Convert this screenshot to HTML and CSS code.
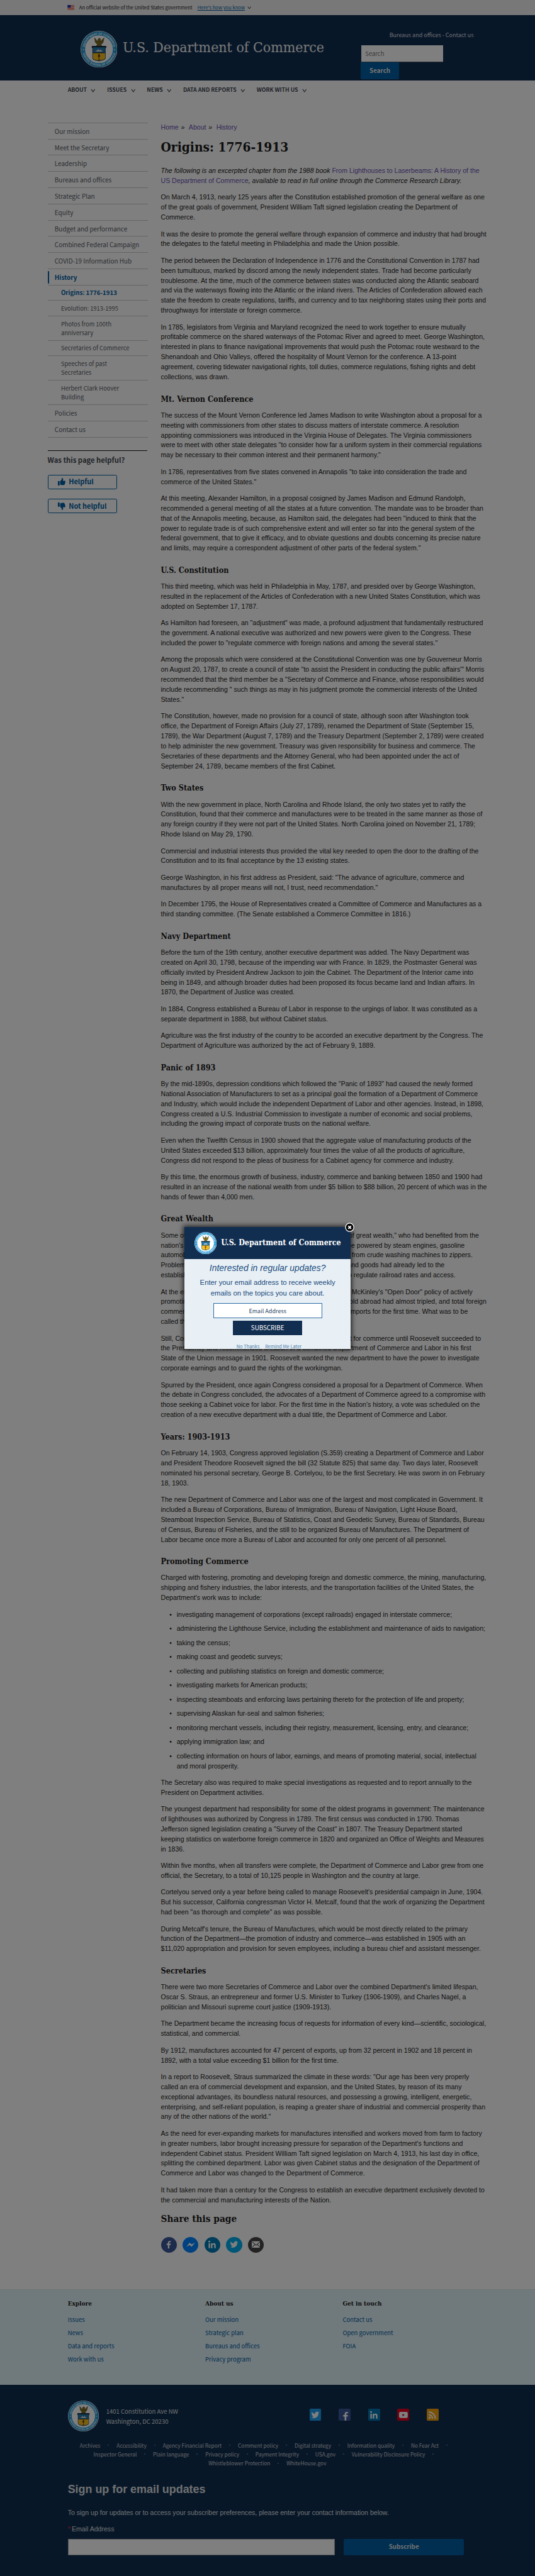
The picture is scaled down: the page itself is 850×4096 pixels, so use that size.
FILE: index.html
```html
<!DOCTYPE html>
<html lang="en">
<head>
<meta charset="utf-8">
<title>Origins: 1776-1913 | U.S. Department of Commerce</title>
<link rel="stylesheet" href="styles.css">
</head>
<body>
<svg class="defs" aria-hidden="true">
  <symbol id="seal" viewBox="0 0 100 100">
    <circle cx="50" cy="50" r="50" fill="#fff"/>
    <circle cx="50" cy="50" r="43" fill="none" stroke="#2b9fd9" stroke-width="10.5"/>
    <circle cx="50" cy="50" r="48" fill="none" stroke="#1d6fa5" stroke-width="1"/>
    <path id="arcTop" d="M10.5 50a39.5 39.5 0 0 1 79 0" fill="none"/>
    <path id="arcBottom" d="M4.5 50a45.500 45.500 0 0 0 91 0" fill="none"/>
    <text class="seal-text"><textPath href="#arcTop" startOffset="50%" text-anchor="middle" textLength="112">DEPARTMENT OF COMMERCE</textPath></text>
    <text class="seal-text"><textPath href="#arcBottom" startOffset="50%" text-anchor="middle" textLength="120">UNITED STATES OF AMERICA</textPath></text>
    <circle cx="7.500" cy="51" r="1.500" fill="#fff"/><circle cx="92.500" cy="51" r="1.500" fill="#fff"/>
    <path d="M38 19l8 10 2-7 3-2 3 2 0 7 10-10-3 13-6 6 3 3-8-1-7 1 3-4-6-6z" fill="#7a6a1c" stroke="#3a3412" stroke-width="1"/>
    <path d="M31 42h38v4l-2 1v27q0 4-5 5l-12 3-12-3q-5-1-5-5V47l-2-1z" fill="#1f7cb5" stroke="#17202b" stroke-width="1.500"/>
    <path d="M33.500 60h33v14q0 3-5 4l-11.500 3-11.500-3q-5-1-5-4z" fill="#f5bf1d"/>
    <path d="M31 42h38v3H31zM33 59h34v1.500H33z" fill="#17202b"/>
    <path d="M39 54l6-1 2-5 4 5 4-4 1 4 5 1-3 3H42z" fill="#d8e6ee" stroke="#17202b" stroke-width=".6"/>
    <path d="M50 62v18M46.500 79h7M48 65h4v6h-4z" stroke="#6b3a12" stroke-width="1.600" fill="#c94d1d"/>
  </symbol>
  <symbol id="chev" viewBox="0 0 12 12"><path d="M1.500 3L6 9.500 10.500 3" fill="none" stroke="currentColor" stroke-width="1.700"/></symbol>
  <symbol id="thumb" viewBox="0 0 20 20"><path d="M0 8.500h4.500V20H0zM6 8.500l4-4.500V1q0-1 1-1 3 0 3 3.500 0 2-1 4h5q2 0 2 2 0 1.300-1 1.700.8.600.6 1.600-.2 1-1.100 1.400.5.700.1 1.600-.3.800-1.100 1 .3.700-.1 1.300-.5.900-1.900.900H12q-2.500 0-4-.8l-2-.7z" fill="currentColor"/></symbol>
  <symbol id="bird" viewBox="0 0 24 24"><path d="M23 5.100c-.8.400-1.700.6-2.600.7.900-.6 1.600-1.400 2-2.500-.9.500-1.900.900-2.900 1.100a4.500 4.500 0 0 0-7.700 4.100C8 8.300 4.700 6.500 2.500 3.800a4.500 4.500 0 0 0 1.400 6c-.7 0-1.400-.2-2-.6 0 2.200 1.500 4.100 3.600 4.500-.7.200-1.400.2-2 .1a4.500 4.500 0 0 0 4.200 3.100A9.100 9.100 0 0 1 1 18.800 12.800 12.800 0 0 0 20.700 7.400C21.600 6.800 22.400 6 23 5.100z"/></symbol>
  <symbol id="fb" viewBox="0 0 24 24"><path d="M14 23V13.500h3.400l.6-3.800h-4V7.300c0-1.200.6-1.900 2-1.900h2V2.100C17.500 2 16.500 2 15.500 2 12.300 2 10 3.900 10 7.100v2.600H6.500v3.800H10V23z"/></symbol>
  <symbol id="lin" viewBox="0 0 24 24"><circle cx="4.500" cy="4" r="2.500"/><path d="M2.500 8.500h4V22h-4zM9 8.500h4v2q1.300-2.400 4.200-2.400 4.800 0 4.800 5.900v8h-4v-7.200q0-3-2.300-3-2.700 0-2.700 3V22H9z"/></symbol>
</svg>

<div class="page">
  <div class="banner">
    <svg class="flag" viewBox="0 0 17 12"><rect width="17" height="12" fill="#fff"/><path d="M0 1h17M0 3.700h17M0 6.400h17M0 9h17M0 11.500h17" stroke="#db3e1f" stroke-width="1.400"/><rect width="8" height="6.500" fill="#1e33b1"/></svg>
    <span>An official website of the United States government</span>
    <a class="how">Here's how you know</a>
    <svg class="chev-s"><use href="#chev"/></svg>
  </div>

  <header class="header">
    <svg class="seal-lg"><use href="#seal"/></svg>
    <div class="brand">U.S. Department of Commerce</div>
    <div class="tools">
      <div class="toplinks">Bureaus and offices - Contact us</div>
      <div class="search-input">Search</div>
      <div class="search-btn">Search</div>
    </div>
  </header>

  <nav class="nav">
    <span>ABOUT<svg><use href="#chev"/></svg></span>
    <span>ISSUES<svg><use href="#chev"/></svg></span>
    <span>NEWS<svg><use href="#chev"/></svg></span>
    <span>DATA AND REPORTS<svg><use href="#chev"/></svg></span>
    <span>WORK WITH US<svg><use href="#chev"/></svg></span>
  </nav>

  <div class="columns">
    <aside class="side">
      <ul class="menu">
        <li>Our mission</li>
        <li>Meet the Secretary</li>
        <li>Leadership</li>
        <li>Bureaus and offices</li>
        <li>Strategic Plan</li>
        <li>Equity</li>
        <li>Budget and performance</li>
        <li>Combined Federal Campaign</li>
        <li>COVID-19 Information Hub</li>
        <li class="current">History</li>
        <li class="sub on">Origins: 1776-1913</li>
        <li class="sub">Evolution: 1913-1995</li>
        <li class="sub">Photos from 100th<br>anniversary</li>
        <li class="sub">Secretaries of Commerce</li>
        <li class="sub">Speeches of past<br>Secretaries</li>
        <li class="sub">Herbert Clark Hoover<br>Building</li>
        <li>Policies</li>
        <li>Contact us</li>
      </ul>
      <div class="feedback">
        <div class="question">Was this page helpful?</div>
        <div class="vote"><svg><use href="#thumb"/></svg>Helpful</div>
        <div class="vote"><svg class="down"><use href="#thumb"/></svg>Not helpful</div>
      </div>
    </aside>

    <main class="main">
      <div class="crumbs"><a>Home</a> » <a>About</a> » <a>History</a></div>
      <h1>Origins: 1776-1913</h1>
      <p><i>The following is an excerpted chapter from the 1988 book </i><a>From Lighthouses to Laserbeams: A History of the<br>US Department of Commerce</a><i>, available to read in full online through the Commerce Research Library.</i></p>
      <p>On March 4, 1913, nearly 125 years after the Constitution established promotion of the general welfare as one<br>of the great goals of government, President William Taft signed legislation creating the Department of<br>Commerce.</p>
      <p>It was the desire to promote the general welfare through expansion of commerce and industry that had brought<br>the delegates to the fateful meeting in Philadelphia and made the Union possible.</p>
      <p>The period between the Declaration of Independence in 1776 and the Constitutional Convention in 1787 had<br>been tumultuous, marked by discord among the newly independent states. Trade had become particularly<br>troublesome. At the time, much of the commerce between states was conducted along the Atlantic seaboard<br>and via the waterways flowing into the Atlantic or the inland rivers. The Articles of Confederation allowed each<br>state the freedom to create regulations, tariffs, and currency and to tax neighboring states using their ports and<br>throughways for interstate or foreign commerce.</p>
      <p>In 1785, legislators from Virginia and Maryland recognized the need to work together to ensure mutually<br>profitable commerce on the shared waterways of the Potomac River and agreed to meet. George Washington,<br>interested in plans to finance navigational improvements that would push the Potomac route westward to the<br>Shenandoah and Ohio Valleys, offered the hospitality of Mount Vernon for the conference. A 13-point<br>agreement, covering tidewater navigational rights, toll duties, commerce regulations, fishing rights and debt<br>collections, was drawn.</p>

      <h2>Mt. Vernon Conference</h2>
      <p>The success of the Mount Vernon Conference led James Madison to write Washington about a proposal for a<br>meeting with commissioners from other states to discuss matters of interstate commerce. A resolution<br>appointing commissioners was introduced in the Virginia House of Delegates. The Virginia commissioners<br>were to meet with other state delegates "to consider how far a uniform system in their commercial regulations<br>may be necessary to their common interest and their permanent harmony."</p>
      <p>In 1786, representatives from five states convened in Annapolis "to take into consideration the trade and<br>commerce of the United States."</p>
      <p>At this meeting, Alexander Hamilton, in a proposal cosigned by James Madison and Edmund Randolph,<br>recommended a general meeting of all the states at a future convention. The mandate was to be broader than<br>that of the Annapolis meeting, because, as Hamilton said, the delegates had been "induced to think that the<br>power to regulate trade is of such comprehensive extent and will enter so far into the general system of the<br>federal government, that to give it efficacy, and to obviate questions and doubts concerning its precise nature<br>and limits, may require a correspondent adjustment of other parts of the federal system."</p>

      <h2>U.S. Constitution</h2>
      <p>This third meeting, which was held in Philadelphia in May, 1787, and presided over by George Washington,<br>resulted in the replacement of the Articles of Confederation with a new United States Constitution, which was<br>adopted on September 17, 1787.</p>
      <p>As Hamilton had foreseen, an "adjustment" was made, a profound adjustment that fundamentally restructured<br>the government. A national executive was authorized and new powers were given to the Congress. These<br>included the power to "regulate commerce with foreign nations and among the several states."</p>
      <p>Among the proposals which were considered at the Constitutional Convention was one by Gouverneur Morris<br>on August 20, 1787, to create a council of state "to assist the President in conducting the public affairs'" Morris<br>recommended that the third member be a "Secretary of Commerce and Finance, whose responsibilities would<br>include recommending " such things as may in his judgment promote the commercial interests of the United<br>States."</p>
      <p>The Constitution, however, made no provision for a council of state, although soon after Washington took<br>office, the Department of Foreign Affairs (July 27, 1789), renamed the Department of State (September 15,<br>1789), the War Department (August 7, 1789) and the Treasury Department (September 2, 1789) were created<br>to help administer the new government. Treasury was given responsibility for business and commerce. The<br>Secretaries of these departments and the Attorney General, who had been appointed under the act of<br>September 24, 1789, became members of the first Cabinet.</p>

      <h2>Two States</h2>
      <p>With the new government in place, North Carolina and Rhode Island, the only two states yet to ratify the<br>Constitution, found that their commerce and manufactures were to be treated in the same manner as those of<br>any foreign country if they were not part of the United States. North Carolina joined on November 21, 1789;<br>Rhode Island on May 29, 1790.</p>
      <p>Commercial and industrial interests thus provided the vital key needed to open the door to the drafting of the<br>Constitution and to its final acceptance by the 13 existing states.</p>
      <p>George Washington, in his first address as President, said: "The advance of agriculture, commerce and<br>manufactures by all proper means will not, I trust, need recommendation."</p>
      <p>In December 1795, the House of Representatives created a Committee of Commerce and Manufactures as a<br>third standing committee. (The Senate established a Commerce Committee in 1816.)</p>

      <h2>Navy Department</h2>
      <p>Before the turn of the 19th century, another executive department was added. The Navy Department was<br>created on April 30, 1798, because of the impending war with France. In 1829, the Postmaster General was<br>officially invited by President Andrew Jackson to join the Cabinet. The Department of the Interior came into<br>being in 1849, and although broader duties had been proposed its focus became land and Indian affairs. In<br>1870, the Department of Justice was created.</p>
      <p>In 1884, Congress established a Bureau of Labor in response to the urgings of labor. It was constituted as a<br>separate department in 1888, but without Cabinet status.</p>
      <p>Agriculture was the first industry of the country to be accorded an executive department by the Congress. The<br>Department of Agriculture was authorized by the act of February 9, 1889.</p>

      <h2>Panic of 1893</h2>
      <p>By the mid-1890s, depression conditions which followed the "Panic of 1893" had caused the newly formed<br>National Association of Manufacturers to set as a principal goal the formation of a Department of Commerce<br>and Industry, which would include the independent Department of Labor and other agencies. Instead, in 1898,<br>Congress created a U.S. Industrial Commission to investigate a number of economic and social problems,<br>including the growing impact of corporate trusts on the national welfare.</p>
      <p>Even when the Twelfth Census in 1900 showed that the aggregate value of manufacturing products of the<br>United States exceeded $13 billion, approximately four times the value of all the products of agriculture,<br>Congress did not respond to the pleas of business for a Cabinet agency for commerce and industry.</p>
      <p>By this time, the enormous growth of business, industry, commerce and banking between 1850 and 1900 had<br>resulted in an increase of the national wealth from under $5 billion to $88 billion, 20 percent of which was in the<br>hands of fewer than 4,000 men.</p>

      <h2>Great Wealth</h2>
      <div class="para">
        <div class="row w803"><span>Some of them were called "malefactors</span><span>of great wealth," who had benefited from the</span></div>
        <div class="row w767"><span>nation's industrial growth. Factories could</span><span>be powered by steam engines, gasoline</span></div>
        <div class="row w787"><span>automobiles and new inventions ranged</span><span>from crude washing machines to zippers.</span></div>
        <div class="row w716"><span>Problems in moving people</span><span>and goods had already led to the</span></div>
        <div class="row w744"><span>establishment of a commission</span><span>to regulate railroad rates and access.</span></div>
      </div>
      <div class="para">
        <div class="row w787"><span>At the end of the century, President</span><span>McKinley's "Open Door" policy of actively</span></div>
        <div class="row w822"><span>promoting trade: goods</span><span>sold abroad had almost tripled, and total foreign</span></div>
        <div class="row w775"><span>commerce exports exceeded</span><span>imports for the first time. What was to be</span></div>
        <div>called the American Century had begun.</div>
      </div>
      <div class="para">
        <div class="row w808"><span>Still, Congress did not create a</span><span>department for commerce until Roosevelt succeeded to</span></div>
        <div>the Presidency and recommended creation of a combined Department of Commerce and Labor in his first<br>State of the Union message in 1901. Roosevelt wanted the new department to have the power to investigate<br>corporate earnings and to guard the rights of the workingman.</div>
      </div>
      <p>Spurred by the President, once again Congress considered a proposal for a Department of Commerce. When<br>the debate in Congress concluded, the advocates of a Department of Commerce agreed to a compromise with<br>those seeking a Cabinet voice for labor. For the first time in the Nation's history, a vote was scheduled on the<br>creation of a new executive department with a dual title, the Department of Commerce and Labor.</p>

      <h2>Years: 1903-1913</h2>
      <p>On February 14, 1903, Congress approved legislation (S.359) creating a Department of Commerce and Labor<br>and President Theodore Roosevelt signed the bill (32 Statute 825) that same day. Two days later, Roosevelt<br>nominated his personal secretary, George B. Cortelyou, to be the first Secretary. He was sworn in on February<br>18, 1903.</p>
      <p>The new Department of Commerce and Labor was one of the largest and most complicated in Government. It<br>included a Bureau of Corporations, Bureau of Immigration, Bureau of Navigation, Light House Board,<br>Steamboat Inspection Service, Bureau of Statistics, Coast and Geodetic Survey, Bureau of Standards, Bureau<br>of Census, Bureau of Fisheries, and the still to be organized Bureau of Manufactures. The Department of<br>Labor became once more a Bureau of Labor and accounted for only one percent of all personnel.</p>

      <h2>Promoting Commerce</h2>
      <p>Charged with fostering, promoting and developing foreign and domestic commerce, the mining, manufacturing,<br>shipping and fishery industries, the labor interests, and the transportation facilities of the United States, the<br>Department's work was to include:</p>
      <ul class="list">
        <li>investigating management of corporations (except railroads) engaged in interstate commerce;</li>
        <li>administering the Lighthouse Service, including the establishment and maintenance of aids to navigation;</li>
        <li>taking the census;</li>
        <li>making coast and geodetic surveys;</li>
        <li>collecting and publishing statistics on foreign and domestic commerce;</li>
        <li>investigating markets for American products;</li>
        <li>inspecting steamboats and enforcing laws pertaining thereto for the protection of life and property;</li>
        <li>supervising Alaskan fur-seal and salmon fisheries;</li>
        <li>monitoring merchant vessels, including their registry, measurement, licensing, entry, and clearance;</li>
        <li>applying immigration law; and</li>
        <li>collecting information on hours of labor, earnings, and means of promoting material, social, intellectual<br>and moral prosperity.</li>
      </ul>
      <p>The Secretary also was required to make special investigations as requested and to report annually to the<br>President on Department activities.</p>
      <p>The youngest department had responsibility for some of the oldest programs in government: The maintenance<br>of lighthouses was authorized by Congress in 1789. The first census was conducted in 1790. Thomas<br>Jefferson signed legislation creating a "Survey of the Coast" in 1807. The Treasury Department started<br>keeping statistics on waterborne foreign commerce in 1820 and organized an Office of Weights and Measures<br>in 1836.</p>
      <p>Within five months, when all transfers were complete, the Department of Commerce and Labor grew from one<br>official, the Secretary, to a total of 10,125 people in Washington and the country at large.</p>
      <p>Cortelyou served only a year before being called to manage Roosevelt's presidential campaign in June, 1904.<br>But his successor, California congressman Victor H. Metcalf, found that the work of organizing the Department<br>had been "as thorough and complete" as was possible.</p>
      <p>During Metcalf's tenure, the Bureau of Manufactures, which would be most directly related to the primary<br>function of the Department—the promotion of industry and commerce—was established in 1905 with an<br>$11,020 appropriation and provision for seven employees, including a bureau chief and assistant messenger.</p>

      <h2>Secretaries</h2>
      <p>There were two more Secretaries of Commerce and Labor over the combined Department's limited lifespan,<br>Oscar S. Straus, an entrepreneur and former U.S. Minister to Turkey (1906-1909), and Charles Nagel, a<br>politician and Missouri supreme court justice (1909-1913).</p>
      <p>The Department became the increasing focus of requests for information of every kind—scientific, sociological,<br>statistical, and commercial.</p>
      <p>By 1912, manufactures accounted for 47 percent of exports, up from 32 percent in 1902 and 18 percent in<br>1892, with a total value exceeding $1 billion for the first time.</p>
      <p>In a report to Roosevelt, Straus summarized the climate in these words: "Our age has been very properly<br>called an era of commercial development and expansion, and the United States, by reason of its many<br>exceptional advantages, its boundless natural resources, and possessing a growing, intelligent, energetic,<br>enterprising, and self-reliant population, is reaping a greater share of industrial and commercial prosperity than<br>any of the other nations of the world."</p>
      <p>As the need for ever-expanding markets for manufactures intensified and workers moved from farm to factory<br>in greater numbers, labor brought increasing pressure for separation of the Department's functions and<br>independent Cabinet status. President William Taft signed legislation on March 4, 1913, his last day in office,<br>splitting the combined department. Labor was given Cabinet status and the designation of the Department of<br>Commerce and Labor was changed to the Department of Commerce.</p>
      <p>It had taken more than a century for the Congress to establish an executive department exclusively devoted to<br>the commercial and manufacturing interests of the Nation.</p>

      <div class="share-title">Share this page</div>
      <div class="share">
        <span class="c-fb"><svg><use href="#fb"/></svg></span>
        <span class="c-ms"><svg viewBox="0 0 24 24"><path d="M0 18L9.500 7l5 4.500L24 7l-9.500 11-5-4.500z"/></svg></span>
        <span class="c-in"><svg><use href="#lin"/></svg></span>
        <span class="c-tw"><svg><use href="#bird"/></svg></span>
        <span class="c-em"><svg viewBox="0 0 24 24"><rect y="3" width="24" height="18" rx="1.500"/><path d="M1.500 5L12 14 22.500 5M1.500 19.500L8.500 12M22.500 19.500L15.500 12" fill="none" stroke="#444" stroke-width="1.800"/></svg></span>
      </div>
    </main>
  </div>

  <footer>
    <div class="foot-links">
      <div><b>Explore</b><a>Issues</a><a>News</a><a>Data and reports</a><a>Work with us</a></div>
      <div><b>About us</b><a>Our mission</a><a>Strategic plan</a><a>Bureaus and offices</a><a>Privacy program</a></div>
      <div><b>Get in touch</b><a>Contact us</a><a>Open government</a><a>FOIA</a></div>
    </div>
    <div class="foot-dark">
      <div class="identity">
        <svg class="seal-md"><use href="#seal"/></svg>
        <div class="address">1401 Constitution Ave NW<br>Washington, DC 20230</div>
        <div class="social">
          <span class="s-tw"><svg><use href="#bird"/></svg></span>
          <span class="s-fb"><svg class="low"><use href="#fb"/></svg></span>
          <span class="s-in"><svg><use href="#lin"/></svg></span>
          <span class="s-yt"><svg viewBox="0 0 24 24"><rect y="3.500" width="24" height="17" rx="4"/><path d="M9.500 8.500v7l6-3.500z" fill="#b0001a"/></svg></span>
          <span class="s-rs"><svg viewBox="0 0 24 24"><circle cx="4.500" cy="19.500" r="3"/><path d="M2 11.500a10.500 10.500 0 0 1 10.500 10.500M2 4a18 18 0 0 1 18 18" fill="none" stroke="#fff" stroke-width="3.500"/></svg></span>
        </div>
      </div>
      <div class="legal">
        <div><span class="dot">Archives</span><span class="dot">Accessibility</span><span class="dot">Agency Financial Report</span><span class="dot">Comment policy</span><span class="dot">Digital strategy</span><span class="dot">Information quality</span><span class="dot">No Fear Act</span></div>
        <div><span class="dot">Inspector General</span><span class="dot">Plain language</span><span class="dot">Privacy policy</span><span class="dot">Payment Integrity</span><span class="dot">USA.gov</span><span class="dot">Vulnerability Disclosure Policy</span></div>
        <div><span class="dot">Whistleblower Protection</span><span>WhiteHouse.gov</span></div>
      </div>
      <div class="signup">
        <div class="signup-title">Sign up for email updates</div>
        <div class="signup-text">To sign up for updates or to access your subscriber preferences, please enter your contact information below.</div>
        <div class="signup-label"><span>*</span>Email Address</div>
        <div class="signup-form"><div class="signup-input"></div><div class="signup-btn">Subscribe</div></div>
      </div>
    </div>
  </footer>

  <div class="overlay"></div>
  <div class="modal">
    <div class="modal-body">
      <div class="modal-head"><svg><use href="#seal"/></svg><span>U.S. Department of Commerce</span></div>
      <div class="modal-title">Interested in regular updates?</div>
      <div class="modal-text">Enter your email address to receive weekly<br>emails on the topics you care about.</div>
      <div class="modal-input">Email Address</div>
      <div class="modal-btn">SUBSCRIBE</div>
      <div class="modal-links"><span>No Thanks</span><span>Remind Me Later</span></div>
    </div>
    <svg class="close" viewBox="0 0 24 24"><circle cx="12" cy="12" r="10.500" fill="#000" stroke="#fff" stroke-width="2"/><path d="M8.500 8.500l7 7M15.500 8.500l-7 7" stroke="#fff" stroke-width="3"/></svg>
  </div>
</div>
</body>
</html>
```
FILE: styles.css
```css
* { box-sizing: border-box; }
html { overflow: hidden; }
body { margin: 0; background: #fff; overflow: hidden; }
ul { list-style: none; margin: 0; padding: 0; }
svg { display: block; }
.defs { position: absolute; width: 0; height: 0; }
.seal-text { font: bold 7.5px "Liberation Sans", sans-serif; fill: #fff; }

.page {
  zoom: 0.6294;
  position: relative;
  width: 1350.5px;
  height: 6508px;
  overflow: hidden;
  background: #fff;
  color: #1b1b1b;
  font: 16.8px/25.2px "Liberation Sans", Arial, sans-serif;
  white-space: nowrap;
}

/* Sans face used by the site chrome */
.banner, .toplinks, .search-input, .search-btn, .nav, .side, .foot-links a,
.address, .legal, .signup-btn, .modal-input, .modal-btn, .modal-links {
  font-family: "Noto Sans CJK SC", "Noto Sans", sans-serif;
}
.brand, h1, h2, .share-title, .foot-links b, .modal-head {
  font-family: "DejaVu Serif Condensed", "DejaVu Serif", serif;
}

.banner {
  display: flex;
  align-items: center;
  height: 38px;
  padding-left: 170px;
  background: #f0f0f0;
  font-size: 12.05px;
  line-height: 16px;
}
.flag { width: 18px; height: 12px; margin-right: 12px; }
.how { margin-left: 13px; color: #005ea2; text-decoration: underline; }
.chev-s { width: 10px; height: 10px; margin-left: 6px; stroke-width: 2; }

.header {
  display: flex;
  height: 166px;
  padding-left: 203px;
  background: #112e51;
  color: #fff;
}
.seal-lg { width: 93px; height: 93px; margin-top: 40px; }
.brand { width: 602px; padding: 61px 0 0 14px; font-size: 36.4px; line-height: 44px; color: #f2f2f2; }
.tools { padding-top: 39px; }
.toplinks { margin-left: 85px; height: 37px; font-size: 14.36px; line-height: 24px; color: #dcdee0; }
.tools .search-input {
  width: 207px;
  height: 43px;
  margin-left: 14px;
  padding-left: 10px;
  background: #fff;
  border-bottom: 1px solid #565c65;
  color: #757575;
  font-size: 15px;
  line-height: 43px;
}
.search-btn {
  width: 96px;
  height: 42px;
  margin: 1px 0 0 13px;
  border-radius: 0 0 4px 4px;
  background: #005ea2;
  color: #e6e6e6;
  font-size: 15.6px;
  font-weight: 700;
  line-height: 42px;
  text-align: center;
}

.nav {
  display: flex;
  gap: 29px;
  height: 105.6px;
  padding: 14px 0 0 171px;
  font-size: 13.98px;
  font-weight: 700;
  line-height: 20px;
  color: #3d4551;
}
.nav span { display: flex; align-items: center; height: 20px; }
.nav svg { width: 12px; height: 12px; margin-left: 10px; margin-top: 2px; }

.columns { display: flex; height: 5474.4px; padding-left: 120px; }
.side { width: 286px; color: #565c65; }
.menu { width: 254px; border-top: 1px solid #c9c9c9; }
.menu li {
  height: 41px;
  padding: 8px 0 7px 18px;
  border-bottom: 1px solid #c9c9c9;
  font-size: 15.8px;
  line-height: 25px;
}
.menu .current {
  position: relative;
  color: #005ea2;
  font-weight: 700;
}
.menu .current::before {
  content: "";
  position: absolute;
  left: 0;
  top: 5px;
  width: 4px;
  height: 31px;
  border-radius: 4px;
  background: #005ea2;
}
.menu .sub { height: auto; padding: 7.4px 0 7.4px 34px; font-size: 14.85px; line-height: 22.65px; }
.menu .on { color: #005ea2; font-weight: 700; font-size: 15.4px; }
.feedback { width: 252px; margin-top: 32px; border-top: 1px solid #1b1b1b; }
.question { padding-top: 10px; height: 60.5px; font-size: 17.86px; font-weight: 700; line-height: 26px; color: #454a52; }
.vote {
  display: flex;
  align-items: center;
  gap: 8px;
  width: 176px;
  height: 37px;
  margin-bottom: 23.7px;
  padding-left: 25px;
  border: 2px solid #005ea2;
  border-radius: 4px;
  color: #005ea2;
  font-size: 17.4px;
  font-weight: 700;
}
.vote svg { width: 19px; height: 19px; }
.vote .down { transform: scaleY(-1); }

.main { width: 840px; }
.main a { color: #6a50b0; }
.crumbs { height: 25.2px; word-spacing: 1.5px; }
.crumbs a + a { margin-left: 4px; }
h1 { margin: 14.7px 0 26.2px; height: 44px; font-size: 33px; line-height: 44px; }
h2 { height: 24px; margin: 29.9px 0 17.8px; font-size: 20.06px; line-height: 24px; }
.main p, .para { margin: 0 0 16.8px; }
.main p:has(+ h2), .para:has(+ h2) { margin-bottom: 0; }
.row { display: flex; justify-content: space-between; }
.w716 { width: 716px; }
.w744 { width: 744px; }
.w767 { width: 767px; }
.w775 { width: 775px; }
.w787 { width: 787px; }
.w803 { width: 803px; }
.w808 { width: 808px; }
.w822 { width: 822px; }
.list { margin-bottom: 16.8px; }
.list li { position: relative; margin-bottom: 10.6px; padding-left: 40px; }
.list li:last-child { margin-bottom: 0; }
.list li::before { content: "•"; position: absolute; left: 22px; }
.share-title { padding-top: 1px; font-size: 24.33px; font-weight: 700; line-height: 32px; }
.share { display: flex; gap: 15px; margin-top: 30px; }
.share span { width: 40px; height: 40px; padding: 9px; border-radius: 50%; }
.share svg { width: 22px; height: 22px; fill: #fff; }
.c-fb { background: #3b5998; }
.c-ms { background: #0084ff; }
.c-in { background: #007bb6; }
.c-tw { background: #00aced; }
.c-em { background: #444; }

.foot-links {
  display: flex;
  height: 241px;
  padding: 20px 0 0 171px;
  background: #e1f3f8;
  border-top: 1px solid #d8ece0;
}
.foot-links div { display: flex; flex-direction: column; width: 347px; }
.foot-links b { height: 37.5px; font-size: 15.84px; line-height: 28px; }
.foot-links a { height: 33.4px; color: #005ea2; font-size: 15.1px; line-height: 33.4px; }
.foot-dark { height: 483px; padding: 40px 0 0 171px; background: #112e51; color: #dfe1e2; }
.identity { display: flex; height: 78px; }
.seal-md { width: 78px; height: 78px; }
.address { width: 532px; padding: 16px 0 0 19px; font-size: 15.2px; line-height: 25.4px; }
.social { display: flex; gap: 44px; padding-top: 21px; }
.social span { width: 30px; height: 30px; padding: 4px; border-radius: 3px; }
.social svg { width: 22px; height: 22px; fill: #fff; }
.social .low { width: 25px; height: 27px; }
.s-tw { background: #1da1f2; }
.s-fb { background: #3b5998; }
.s-in { background: #0077b5; }
.s-yt { background: #e6001f; }
.s-rs { background: #f7a30a; }
.legal { width: 1008px; margin-top: 23px; font-size: 13.28px; line-height: 22.8px; color: #c8ccd2; }
.legal div { display: flex; justify-content: center; }
.dot { display: flex; align-items: center; }
.dot::after { content: ""; width: 3px; height: 3px; margin: 0 19px; border-radius: 50%; background: #4c7a9c; }
.signup-title { margin-top: 35px; font-size: 28.47px; font-weight: 700; line-height: 40px; }
.signup-text { margin-top: 27px; }
.signup-label { margin-top: 16.5px; }
.signup-label span { display: inline-block; width: 10px; color: #e31c3d; }
.signup-form { display: flex; gap: 22px; margin-top: 11.5px; }
.signup-input { width: 675px; height: 41.5px; background: #fff; border: 1px solid #a9aeb1; }
.signup-btn {
  width: 303px;
  height: 41.5px;
  border-radius: 4px;
  background: #005ea2;
  font-size: 15.6px;
  font-weight: 700;
  line-height: 41px;
  text-align: center;
}

.overlay { position: absolute; inset: 0; background: rgba(0, 0, 0, 0.5); }
.modal { position: absolute; left: 466px; top: 3100px; width: 419px; height: 308px; box-shadow: 0 0 12px 3px rgba(0, 0, 0, 0.7); }
.modal-body { height: 308px; overflow: hidden; background: #e8f0f6; color: #1a4a7a; text-align: center; }
.modal-head { display: flex; height: 81px; padding-left: 25px; background: #112e51; color: #fff; }
.modal-head svg { width: 56px; height: 56px; margin: 12px 11px 0 0; }
.modal-head span { padding-top: 26px; font-size: 19.8px; font-weight: 700; line-height: 30px; }
.modal-title { margin-top: 6px; font-size: 22.1px; font-style: italic; line-height: 32px; }
.modal-text { margin-top: 8px; font-size: 17.94px; line-height: 27px; }
.modal-input { width: 275px; height: 38px; margin: 10.5px auto 0 72px; border: 1px solid #2e6ca4; background: #fff; color: #1f3f63; font-size: 14.4px; line-height: 36px; }
.modal-btn { width: 175px; height: 36px; margin: 7.5px auto 0 122px; background: #112e51; color: #fff; font-size: 15.6px; line-height: 36px; }
.modal-links { display: flex; gap: 14px; margin: 20px 0 0 131px; font-size: 11.8px; line-height: 20px; color: #4f7ea8; }
.close { position: absolute; left: 404px; top: -11px; width: 24px; height: 24px; }
```
